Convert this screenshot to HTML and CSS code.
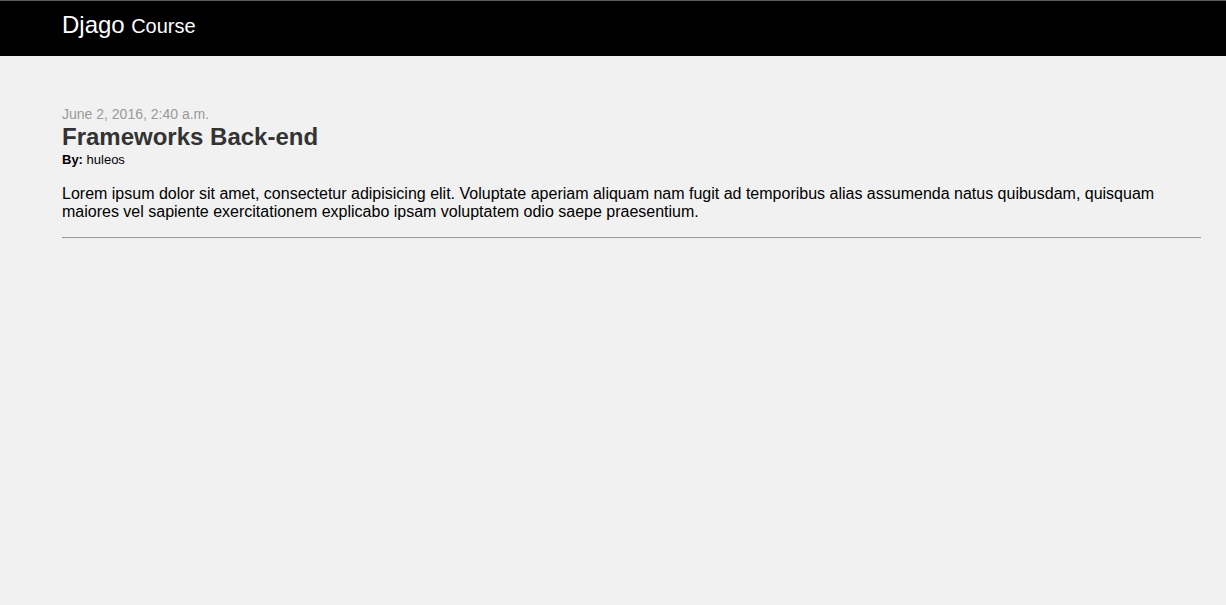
FILE: index.html
```html
<!DOCTYPE html>
<html>
<head>
<meta charset="utf-8">
<link rel="stylesheet" href="styles.css">
</head>
<body>
<header class="topbar">
  <div class="brand"><span class="brand-main">Djago</span> <span class="brand-sub">Course</span></div>
</header>
<main class="content">
  <article class="post">
    <div class="post-date">June 2, 2016, 2:40 a.m.</div>
    <h1 class="post-title">Frameworks Back-end</h1>
    <div class="post-author"><strong>By:</strong> huleos</div>
    <p class="post-body">Lorem ipsum dolor sit amet, consectetur adipisicing elit. Voluptate aperiam aliquam nam fugit ad temporibus alias assumenda natus quibusdam, quisquam maiores vel sapiente exercitationem explicabo ipsam voluptatem odio saepe praesentium.</p>
    <hr class="post-sep">
  </article>
</main>
</body>
</html>
```
FILE: styles.css
```css
html, body {
  margin: 0;
  padding: 0;
}
body {
  background: #f1f1f1;
  font-family: "Liberation Sans", Arial, Helvetica, sans-serif;
  color: #000;
}
.topbar {
  background: #000;
  border-top: 1px solid #5a5a5a;
  height: 55px;
  padding-left: 62px;
  display: flex;
  align-items: center;
}
.brand {
  color: #fff;
  line-height: 1;
  padding-bottom: 7px;
}
.brand-main {
  font-size: 24px;
}
.brand-sub {
  font-size: 20px;
  margin-left: 2px;
}
.content {
  padding: 50px 25px 0 62px;
}
.post-date {
  color: #999;
  font-size: 14px;
  line-height: 16px;
}
.post-title {
  margin: 0;
  font-size: 24px;
  line-height: 30px;
  color: #333;
  font-weight: bold;
}
.post-author {
  font-size: 13px;
  line-height: 16px;
}
.post-body {
  font-size: 16px;
  line-height: 18px;
  margin: 17px 0 16px;
}
.post-sep {
  margin: 0;
  border: 0;
  border-top: 1px solid #9a9a9a;
  border-bottom: 1px solid #eee;
}
```
